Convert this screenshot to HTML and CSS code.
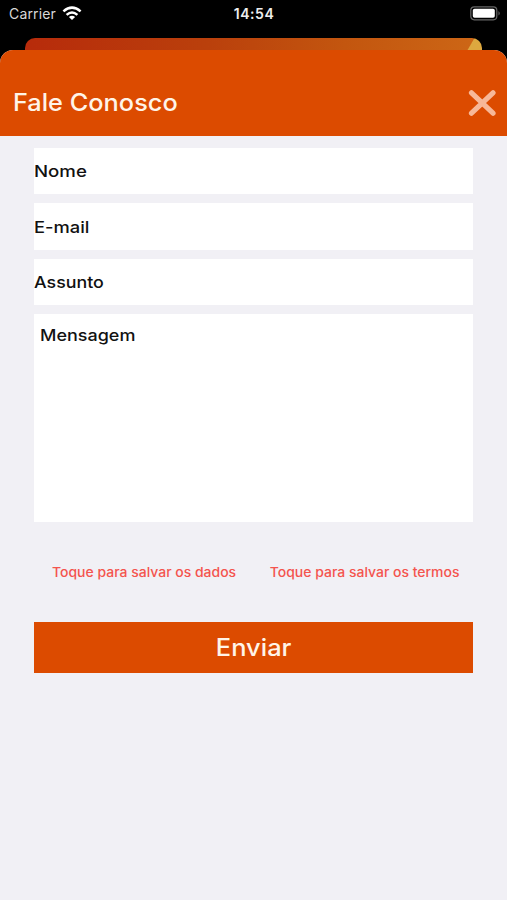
FILE: index.html
```html
<!DOCTYPE html>
<html lang="pt-BR">
<head>
<meta charset="utf-8">
<title>Fale Conosco</title>
<link rel="stylesheet" href="styles.css">
</head>
<body>
<div class="status">
  <div class="carrier"><span>Carrier</span>
    <svg width="20" height="15" viewBox="0 0 20 15" fill="none" stroke="#fff" stroke-width="2.5"><path d="M1.4 5.4Q10-2.2 18.6 5.4M4.6 8.9Q10 4 15.4 8.9"/><path d="M6.9 10.9Q10 8.5 13.1 10.9L10 14Z" fill="#fff" stroke="none"/></svg>
  </div>
  <time class="clock">14:54</time>
  <svg class="battery" width="31" height="15" viewBox="0 0 31 15"><rect x=".8" y=".8" width="26" height="13" rx="3.5" fill="none" stroke="#666" stroke-width="1.2"/><rect x="2.8" y="2.8" width="22" height="9" rx="1.8" fill="#fff"/><path d="M28.5 5Q31 7.3 28.5 9.6Z" fill="#666"/></svg>
</div>
<div class="behind"></div>
<main class="sheet">
  <header class="head">
    <h1 class="title">Fale Conosco</h1>
    <svg width="28" height="28" viewBox="0 0 28 28" stroke="#f7b898" stroke-width="5.2" stroke-linecap="round"><path d="M3.5 3.8 25 24.2M25 3.8 3.5 24.2"/></svg>
  </header>
  <form class="form">
    <div class="field"><span class="nome">Nome</span></div>
    <div class="field"><span class="email">E-mail</span></div>
    <div class="field"><span class="assunto">Assunto</span></div>
    <div class="field message"><span class="mensagem">Mensagem</span></div>
    <div class="links"><span class="dados">Toque para salvar os dados</span><span class="termos">Toque para salvar os termos</span></div>
    <button class="send" type="button"><span class="enviar">Enviar</span></button>
  </form>
</main>
</body>
</html>
```
FILE: styles.css
```css
* { box-sizing: border-box; }
body { margin: 0; height: 900px; overflow: hidden; background: #000; font-family: Inter, sans-serif; }
svg { display: block; flex: none; }
.status { height: 38px; display: grid; grid-template-columns: 1fr auto 1fr; align-items: start; padding: 6px 6px 0 9px; color: #fff; }
.carrier { display: flex; gap: 6px; font-size: 14px; line-height: 16px; color: #d8d8d8; letter-spacing: .15px; }
.clock { margin-left: -2px; font-size: 14px; line-height: 16px; font-weight: 600; letter-spacing: .55px; color: #eee; }
.battery { justify-self: end; }
.behind { height: 12px; margin: 0 25px; border-radius: 10px 10px 0 0; background: linear-gradient(120deg, transparent 0 calc(100% - 13px), #dda83f calc(100% - 12px)), linear-gradient(90deg, #b72b0b, #ba400c 40%, #c3560f 70%, #cd6716); }
.sheet { height: 850px; background: #f1f0f5; border-radius: 13px 13px 0 0; overflow: hidden; }
.head { height: 86px; padding: 24px 11px 4px 14px; background: #dc4b00; display: flex; justify-content: space-between; align-items: flex-start; }
.title { margin: 14px 0 0 -1px; color: #fff4e8; font-size: 24px; line-height: 30px; font-weight: 500; transform: scaleX(1.055); transform-origin: left; }
.head svg { margin-top: 15px; }
.form { padding: 12px 34px 0; display: flex; flex-direction: column; gap: 9px; }
.field { height: 46.4px; background: #fff; display: flex; align-items: center; font-size: 16.5px; line-height: 22px; font-weight: 550; color: #111; }
.field span, .dados { transform-origin: left; }
.nome { transform: scaleX(1.13); }
.email { transform: scaleX(1.11); }
.assunto { transform: scaleX(1.08); }
.mensagem { transform: scaleX(1.09); }
.message { height: 208px; align-items: flex-start; padding: 10px 6px; }
.links { height: 82px; display: flex; justify-content: space-between; padding: 32px 13px 0 18px; font-size: 13px; line-height: 18px; font-weight: 500; color: #f4544e; white-space: nowrap; }
.dados { transform: scaleX(1.075); }
.termos { transform: scaleX(1.075); transform-origin: right; }
.send { height: 51px; border: 0; padding: 0; background: #dc4b00; color: #fff4e8; font: 500 24px/30px Inter, sans-serif; }
.enviar { display: inline-block; transform: scaleX(1.06); }
```
